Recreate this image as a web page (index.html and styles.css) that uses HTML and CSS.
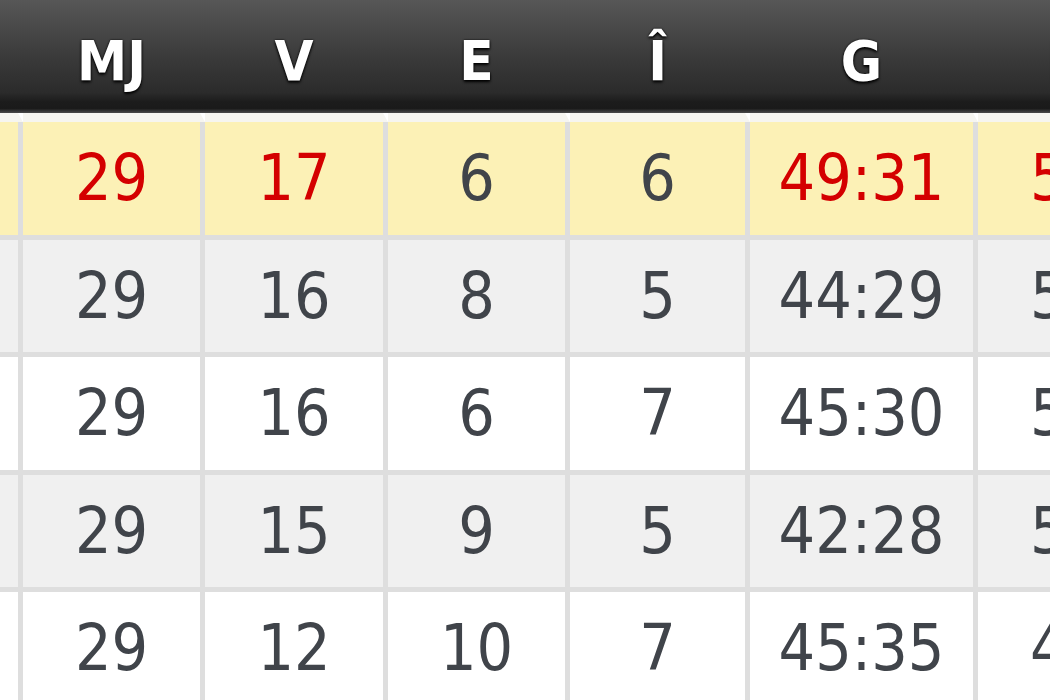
FILE: index.html
```html
<!DOCTYPE html>
<html lang="ro">
<head>
<meta charset="utf-8">
<title>Clasament</title>
<link rel="stylesheet" href="styles.css">
</head>
<body>
<table class="standings">
  <colgroup>
    <col class="c-rank"><col class="c-num"><col class="c-num2"><col class="c-num"><col class="c-num3"><col class="c-goals"><col class="c-pts">
  </colgroup>
  <thead>
    <tr>
      <th>#</th><th>MJ</th><th>V</th><th>E</th><th>Î</th><th>G</th><th>P</th>
    </tr>
  </thead>
  <tbody>
    <tr class="lead">
      <td>1</td><td class="hl">29</td><td class="hl">17</td><td>6</td><td>6</td><td class="hl">49:31</td><td class="hl">57</td>
    </tr>
    <tr class="alt">
      <td>2</td><td>29</td><td>16</td><td>8</td><td>5</td><td>44:29</td><td>56</td>
    </tr>
    <tr>
      <td>3</td><td>29</td><td>16</td><td>6</td><td>7</td><td>45:30</td><td>54</td>
    </tr>
    <tr class="alt">
      <td>4</td><td>29</td><td>15</td><td>9</td><td>5</td><td>42:28</td><td>54</td>
    </tr>
    <tr>
      <td>5</td><td>29</td><td>12</td><td>10</td><td>7</td><td>45:35</td><td>46</td>
    </tr>
  </tbody>
</table>
</body>
</html>
```
FILE: styles.css
```css
html, body {
  margin: 0;
  padding: 0;
  background: #ffffff;
  overflow: hidden;
}

.standings {
  margin-left: -160px;
  border-collapse: separate;
  border-spacing: 0;
  table-layout: fixed;
  width: 1320px;
  font-family: "DejaVu Sans Condensed", "DejaVu Sans", "Liberation Sans", sans-serif;
  font-stretch: condensed;
}

.c-rank { width: 183px; }
.c-num { width: 182px; }
.c-num2 { width: 183px; }
.c-num3 { width: 180px; }
.c-goals { width: 228px; }
.c-pts { width: 182px; }

.standings th {
  box-sizing: content-box;
  height: 104px;
  padding: 9px 0 0 0;
  border-right: 5px solid transparent;
  border-bottom: 9px solid #f6f5f0;
  background: linear-gradient(#575757 0%, #3d3d3d 45%, #2b2b2b 82%, #1c1c1c 90%, #1a1a1a 96%, #4a4a4a 100%);
  color: #ffffff;
  font-weight: bold;
  font-size: 56px;
  line-height: 1;
  text-align: center;
  vertical-align: middle;
  text-shadow: 0 2px 3px #000000, 0 0 2px #000000;
}

.standings td {
  box-sizing: content-box;
  height: 112.5px;
  padding: 0;
  border-right: 5px solid #dedede;
  border-bottom: 5px solid #dedede;
  background: #ffffff;
  color: #40444a;
  font-size: 64px;
  line-height: 1;
  text-align: center;
  vertical-align: middle;
}

.standings tr.alt td {
  background: #f0f0f0;
}

.standings tr.lead td {
  background: #fcf1b6;
}

.standings td.hl {
  color: #d40000;
}
```
